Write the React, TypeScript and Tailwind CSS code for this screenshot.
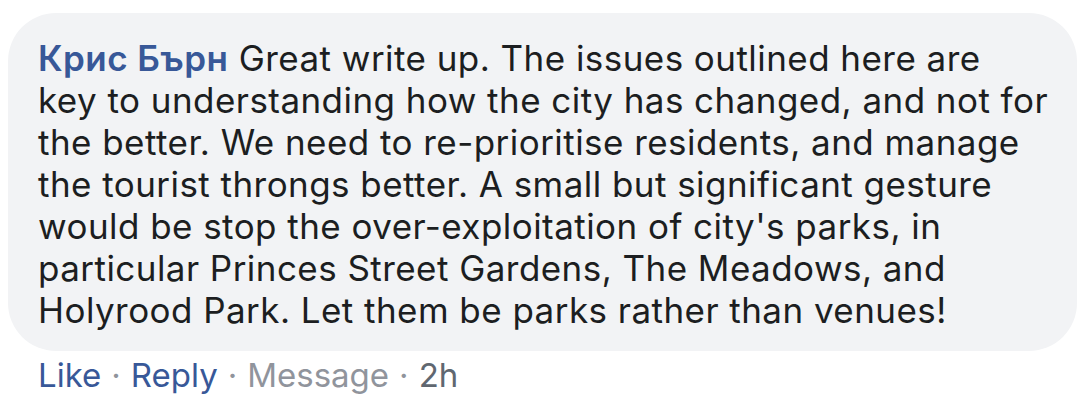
const lines = [
  "key to understanding how the city has changed, and not for",
  "the better. We need to re-prioritise residents, and manage",
  "the tourist throngs better. A small but significant gesture",
  "would be stop the over-exploitation of city's parks, in",
  "particular Princes Street Gardens, The Meadows, and",
  "Holyrood Park. Let them be parks rather than venues!",
];

export default function App() {
  return (
    <div className="min-h-screen bg-white pl-[8px] pt-[13px] font-['Inter','Liberation_Sans',sans-serif]">
      <div className="w-[1069px] rounded-[48px] bg-[#f2f3f5] px-[30px] pt-[24px] pb-[20px] text-[35px] leading-[42px] tracking-[0.45px] text-[#1c1e21]">
        <p className="whitespace-nowrap">
          <a href="#" className="font-semibold text-[#385898]">Крис Бърн</a> Great write up. The issues outlined here are
          {lines.map((l) => (
            <span key={l}>
              <br />
              {l}
            </span>
          ))}
        </p>
      </div>
      <div className="flex items-center gap-[10px] pl-[30px] pt-[4px] text-[33px] leading-[40px]">
        <a href="#" className="text-[#385898]">Like</a>
        <span className="text-[#90949c]">·</span>
        <a href="#" className="text-[#385898]">Reply</a>
        <span className="text-[#90949c]">·</span>
        <a href="#" className="text-[#90949c]">Message</a>
        <span className="text-[#90949c]">·</span>
        <span className="text-[#606770]">2h</span>
      </div>
    </div>
  );
}
